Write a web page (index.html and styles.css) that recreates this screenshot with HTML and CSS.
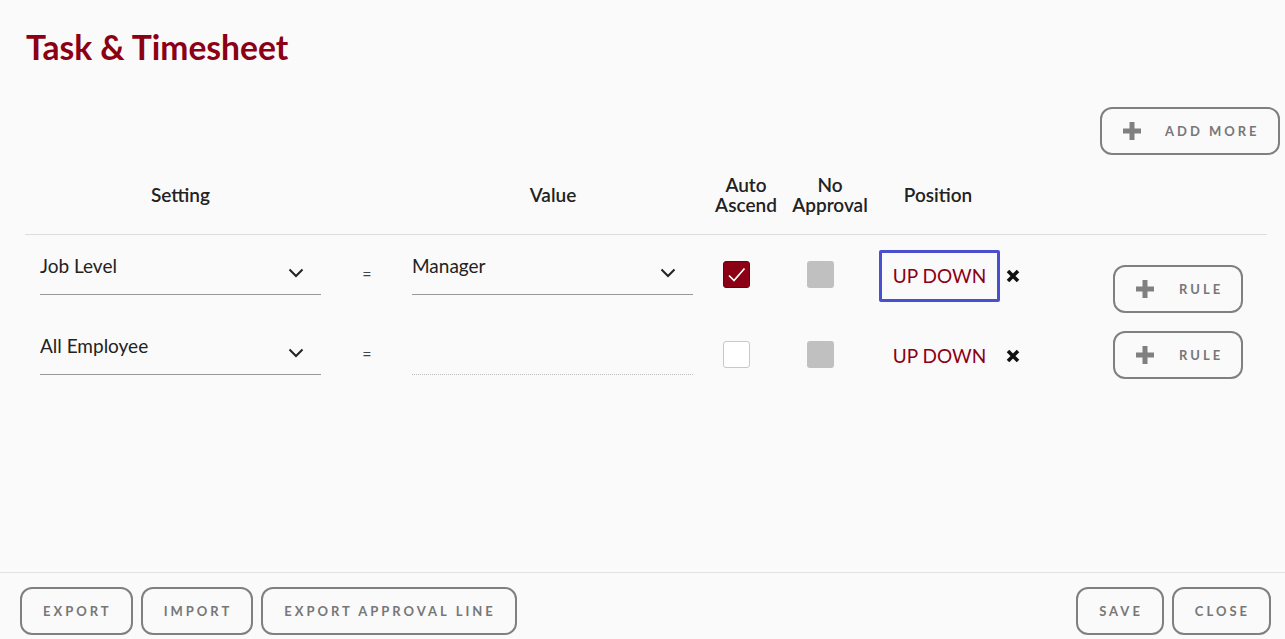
FILE: index.html
```html
<!DOCTYPE html>
<html>
<head>
<meta charset="utf-8">
<link rel="stylesheet" href="styles.css">
</head>
<body>
<div class="page">
  <main class="main">
    <h1 class="title">Task &amp; Timesheet</h1>
    <div class="toolbar">
      <button class="btn btn-add">
        <svg class="plus" viewBox="0 0 20 20" width="20" height="20"><path d="M10 1v18M1 10h18" stroke="#808080" stroke-width="5"/></svg>
        <span>ADD MORE</span>
      </button>
    </div>
    <div class="table">
      <div class="row head">
        <div class="hcell">Setting</div>
        <div class="hcell"></div>
        <div class="hcell">Value</div>
        <div class="hcell">Auto<br>Ascend</div>
        <div class="hcell">No<br>Approval</div>
        <div class="hcell">Position</div>
        <div class="hcell"></div>
      </div>
      <div class="row">
        <div class="cell cell-setting">
          <div class="select"><span>Job Level</span><svg class="chev" viewBox="0 0 16 10" width="16" height="10"><path d="M1.5 1.5l6.5 6.5 6.5-6.5" fill="none" stroke="#222" stroke-width="2"/></svg></div>
        </div>
        <div class="cell cell-eq">=</div>
        <div class="cell cell-value">
          <div class="select"><span>Manager</span><svg class="chev" viewBox="0 0 16 10" width="16" height="10"><path d="M1.5 1.5l6.5 6.5 6.5-6.5" fill="none" stroke="#222" stroke-width="2"/></svg></div>
        </div>
        <div class="cell cell-auto"><span class="check checked"><svg viewBox="0 0 27 27" width="27" height="27"><path d="M6 14.5l5 5L21.5 7.5" fill="none" stroke="#fff" stroke-width="1.7"/></svg></span></div>
        <div class="cell cell-noappr"><span class="graybox"></span></div>
        <div class="cell cell-pos"><span class="updown focused">UP DOWN</span></div>
        <div class="cell cell-actions">
          <svg class="xicon" viewBox="0 0 14 14" width="14" height="14"><path d="M2 2l10 10M12 2L2 12" stroke="#111" stroke-width="3.6"/></svg>
          <button class="btn btn-rule btn-rule-first"><svg class="plus" viewBox="0 0 20 20" width="20" height="20"><path d="M10 1v18M1 10h18" stroke="#808080" stroke-width="5"/></svg><span>RULE</span></button>
        </div>
      </div>
      <div class="row">
        <div class="cell cell-setting">
          <div class="select"><span>All Employee</span><svg class="chev" viewBox="0 0 16 10" width="16" height="10"><path d="M1.5 1.5l6.5 6.5 6.5-6.5" fill="none" stroke="#222" stroke-width="2"/></svg></div>
        </div>
        <div class="cell cell-eq">=</div>
        <div class="cell cell-value">
          <div class="select select-empty"></div>
        </div>
        <div class="cell cell-auto"><span class="check"></span></div>
        <div class="cell cell-noappr"><span class="graybox"></span></div>
        <div class="cell cell-pos"><span class="updown">UP DOWN</span></div>
        <div class="cell cell-actions">
          <svg class="xicon" viewBox="0 0 14 14" width="14" height="14"><path d="M2 2l10 10M12 2L2 12" stroke="#111" stroke-width="3.6"/></svg>
          <button class="btn btn-rule btn-rule-next"><svg class="plus" viewBox="0 0 20 20" width="20" height="20"><path d="M10 1v18M1 10h18" stroke="#808080" stroke-width="5"/></svg><span>RULE</span></button>
        </div>
      </div>
    </div>
  </main>
  <footer class="footer">
    <div class="group">
      <button class="btn btn-foot">EXPORT</button>
      <button class="btn btn-foot">IMPORT</button>
      <button class="btn btn-foot">EXPORT APPROVAL LINE</button>
    </div>
    <div class="group">
      <button class="btn btn-foot">SAVE</button>
      <button class="btn btn-foot">CLOSE</button>
    </div>
  </footer>
</div>
</body>
</html>
```
FILE: styles.css
```css
* { box-sizing: border-box; }
html, body { margin: 0; padding: 0; }
body {
  background: #fafafa;
  font-family: Lato, "Open Sans", sans-serif;
  color: #222;
}
.page {
  height: 639px;
  display: flex;
  flex-direction: column;
}
.main {
  flex: 1;
  padding: 0 18px 0 25px;
}
.title {
  margin: 0;
  padding: 26px 0 0 1px;
  font-size: 33.6px;
  line-height: 42px;
  font-weight: 700;
  color: #8c0015;
}
.toolbar {
  display: flex;
  justify-content: flex-end;
  padding-top: 39px;
  margin-right: -13px;
}
.btn {
  font-family: Lato, sans-serif;
  background: transparent;
  border: 2px solid #808080;
  border-radius: 12px;
  color: #777;
  font-weight: 700;
  font-size: 13px;
  letter-spacing: 3px;
  height: 48px;
  display: inline-flex;
  align-items: center;
  justify-content: center;
  padding: 0;
  cursor: pointer;
}
.btn-add {
  width: 180px;
  padding-left: 20px;
  justify-content: flex-start;
}
.btn-add span { margin-left: 23px; }
.btn-rule {
  width: 130px;
  padding-left: 20px;
  justify-content: flex-start;
}
.btn-rule span { margin-left: 24px; }
.btn-rule-first { margin-top: 30px; }
.btn-rule-next { margin-top: 16px; }

.row {
  display: grid;
  grid-template-columns: 311px 62px 310px 76px 92px 124px 1fr;
  height: 80px;
}
.row.head {
  align-items: center;
  border-bottom: 1px solid #dcdcdc;
}
.hcell {
  text-align: center;
  font-size: 19px;
  font-weight: 600;
  line-height: 20px;
  color: #222;
}
.cell-setting { padding: 0 15px; }
.cell-value { padding: 0 15px 0 14px; }
.select {
  margin-top: 14px;
  height: 46px;
  border-bottom: 1px solid #999;
  display: flex;
  justify-content: space-between;
  padding-top: 5px;
  font-size: 19px;
  line-height: 24px;
  color: #222;
}
.select .chev { margin-top: 14px; margin-right: 17px; }
.select-empty { border-bottom: 1px dotted #bbb; }
.cell-eq {
  text-align: center;
  padding-top: 29px;
  font-size: 16px;
  color: #444;
}
.cell-auto { padding: 26px 0 0 15px; }
.check {
  display: block;
  width: 27px;
  height: 27px;
  border: 1px solid #c8c8c8;
  border-radius: 3px;
  background: #fff;
}
.check.checked {
  background: #8c0015;
  border-color: #6d0010;
}
.check svg { display: block; margin: -1px; }
.cell-noappr { padding: 26px 0 0 23px; }
.graybox {
  display: block;
  width: 27px;
  height: 27px;
  border-radius: 3px;
  background: #c0c0c0;
}
.cell-pos { padding-top: 15px; padding-left: 3px; }
.updown {
  display: inline-flex;
  align-items: center;
  justify-content: center;
  width: 121px;
  height: 52px;
  border: 3px solid transparent;
  border-radius: 2px;
  font-size: 19px;
  color: #8c0015;
  padding-bottom: 1px;
}
.updown.focused { border-color: #4a4fd0; }
.cell-actions {
  display: flex;
  justify-content: space-between;
  align-items: flex-start;
  padding: 0 24px 0 6px;
}
.xicon { margin-top: 34px; }

.footer {
  border-top: 1px solid #e3e3e3;
  height: 67px;
  padding: 14px 14px 0 20px;
  display: flex;
  justify-content: space-between;
  align-items: flex-start;
}
.group { display: flex; gap: 8px; }
.btn-foot { padding: 0 19px 0 21px; }
```
